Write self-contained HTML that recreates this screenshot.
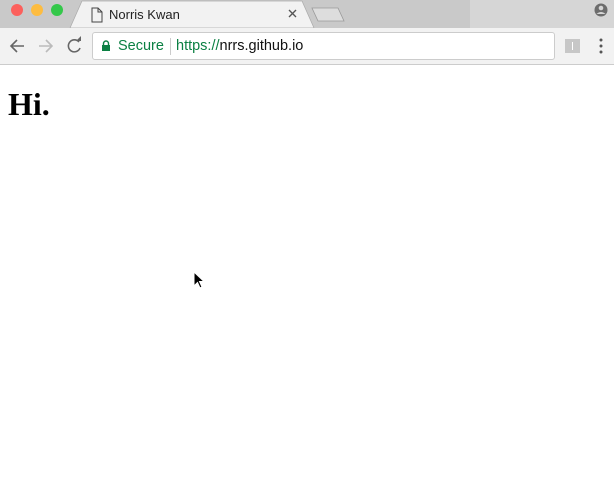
<!DOCTYPE html>
<html><head><style>
body{margin:0;width:614px;height:494px;overflow:hidden;background:#fff;font-family:"Liberation Sans",sans-serif;position:relative}
.abs{position:absolute}
</style></head><body>
<div class="abs" style="left:0;top:0;width:614px;height:28px;background:#c9c9c9"></div>
<div class="abs" style="left:470px;top:0;width:144px;height:28px;background:#d6d6d6"></div>
<svg class="abs" style="left:0;top:0" width="614" height="28">
<circle cx="17" cy="10" r="6" fill="#fc605c"/>
<circle cx="37" cy="10" r="6" fill="#fdbc40"/>
<circle cx="57" cy="10" r="6" fill="#34c84a"/>
<path d="M70 28 L82 1 L302 1 L314 28 Z" fill="#f2f2f2" stroke="#aaa" stroke-width="0.7"/>
<path d="M312 8 L338 8 L344 21 L318 21 Z" fill="#ddd" stroke="#999" stroke-width="0.8"/>
<path d="M92 8 h6 l4 4 v10 h-10 z M98 8 v4 h4" fill="none" stroke="#444" stroke-width="1"/>
<path d="M289 10 l7 7 M296 10 l-7 7" stroke="#555" stroke-width="1.4"/>
<circle cx="601" cy="10" r="6.5" fill="#6d6d6d"/>
<circle cx="601" cy="8" r="2.3" fill="#d6d6d6"/>
<path d="M596.5 14 q4.5 -4 9 0" fill="#d6d6d6"/>
</svg>
<div class="abs" style="left:109px;top:7px;font-size:13px;color:#222">Norris Kwan</div>
<div class="abs" style="left:0;top:28px;width:614px;height:36px;background:#f2f2f2;border-bottom:1px solid #ccc"></div>
<svg class="abs" style="left:0;top:28px" width="614" height="36">
<path d="M24 18 H11 M17 12 l-6 6 6 6" fill="none" stroke="#666" stroke-width="1.6"/>
<path d="M39 18 H52 M46 12 l6 6 -6 6" fill="none" stroke="#bbb" stroke-width="1.6"/>
<path d="M79 14 A6 6 0 1 0 80 20" fill="none" stroke="#666" stroke-width="1.6"/>
<path d="M76 13 L81 13 L81 8 Z" fill="#666"/>
<path d="M540 11 l1.8 4.3 4.6 .4 -3.5 3 1.1 4.5 -4 -2.4 -4 2.4 1.1 -4.5 -3.5 -3 4.6 -.4 z" fill="none" stroke="#555" stroke-width="1.2"/>
<rect x="565" y="11" width="15" height="14" fill="#c7c7c7"/>
<rect x="572" y="14" width="1" height="8" fill="#fff"/>
<circle cx="601" cy="12" r="1.5" fill="#555"/><circle cx="601" cy="18" r="1.5" fill="#555"/><circle cx="601" cy="24" r="1.5" fill="#555"/>
</svg>
<div class="abs" style="left:92px;top:32px;width:461px;height:26px;background:#fff;border:1px solid #ccc;border-radius:3px"></div>
<svg class="abs" style="left:101px;top:40px" width="10" height="12"><path d="M2.5 5 V3.5 a2.5 2.5 0 0 1 5 0 V5" fill="none" stroke="#0b8043" stroke-width="1.4"/><rect x="1" y="5" width="8" height="6" fill="#0b8043"/></svg>
<div class="abs" style="left:118px;top:38px;font-size:14.5px;color:#0b8043">Secure</div>
<div class="abs" style="left:170px;top:38px;width:1px;height:17px;background:#ccc"></div>
<div class="abs" style="left:176px;top:38px;font-size:14.5px;color:#0b8043">https://<span style="color:#111">nrrs.github.io</span></div>
<div class="abs" style="left:8px;top:86px;font:bold 32px 'Liberation Serif',serif;color:#000">Hi.</div>
<svg class="abs" style="left:193px;top:271px" width="12" height="18"><path d="M1 1 V15 L4.5 11.5 L7 17 L9 16 L6.5 10.5 H11 Z" fill="#000" stroke="#fff" stroke-width="1"/></svg>
</body></html>
